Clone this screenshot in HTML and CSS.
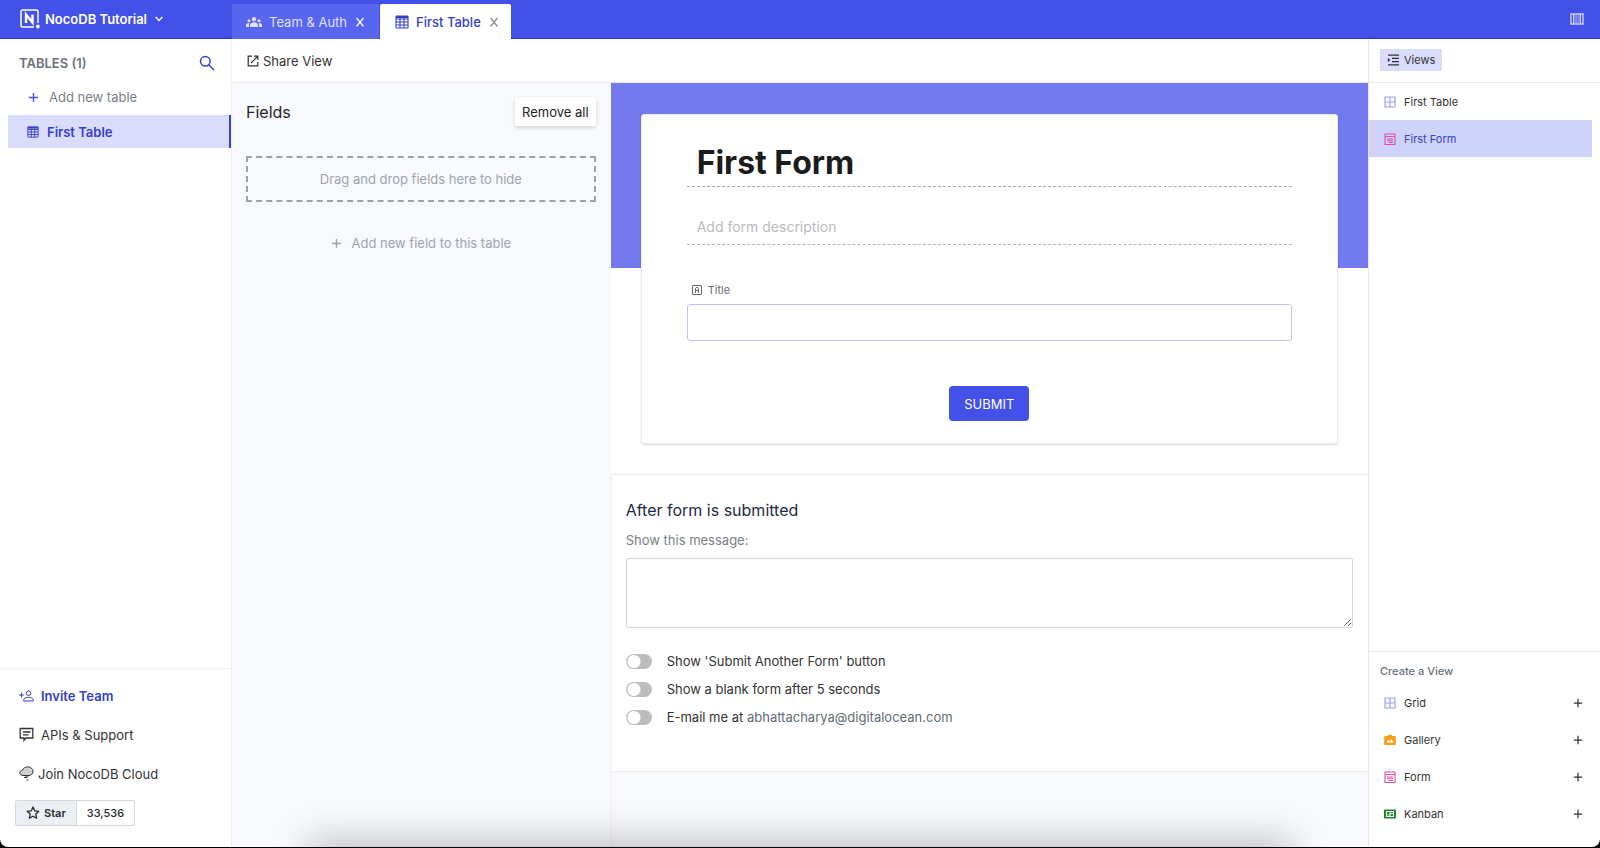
FILE: index.html
```html
<!DOCTYPE html>
<html lang="en">
<head>
<meta charset="utf-8">
<meta name="viewport" content="width=device-width, initial-scale=1">
<title>NocoDB Tutorial</title>
<link rel="stylesheet" href="styles.css">
</head>
<body>
<svg class="sprite" aria-hidden="true">
  <symbol id="table" viewBox="0 0 14 14"><path d="M1.500 1h11a.5.5 0 0 1 .5.500v11a.5.5 0 0 1-.5.500h-11a.5.5 0 0 1-.5-.5v-11A.5.5 0 0 1 1.500 1zM1 4h12M1 7h12M1 10h12M5 3v10M9 3v10" fill="none" stroke="currentColor" stroke-width="1.100"/><path d="M1 1h12v2H1z" fill="currentColor"/></symbol>
  <symbol id="plus" viewBox="0 0 12 12"><path d="M6 1v10M1 6h10" fill="none" stroke="currentColor" stroke-width="1.500"/></symbol>
  <symbol id="close" viewBox="0 0 12 12"><path d="M2.500 2l7 8.500M9.500 2l-7 8.500" fill="none" stroke="currentColor" stroke-width="1.200"/></symbol>
  <symbol id="grid" viewBox="0 0 12 12"><path d="M1 1h10v10H1zM6 1v10M1 6h10" fill="none" stroke="currentColor" stroke-width="1.200"/></symbol>
  <symbol id="form" viewBox="0 0 12 12"><path d="M1 1h10v10.500H1zM1 3.500h10M3 6h6M3 7.800h6M4.500 9.500h4.500" fill="none" stroke="currentColor" stroke-width="1.100"/></symbol>
</svg>
<div class="app">
  <header class="topbar">
    <button class="project" type="button">
      <svg width="20" height="20" viewBox="0 0 20 20" fill="none" stroke="currentColor"><path d="M14 18H2.500A1.500 1.500 0 0 1 1 16.500v-14A1.500 1.500 0 0 1 2.500 1h14A1.500 1.500 0 0 1 18 2.500V14" stroke-width="1.500"/><path d="M6 14V5.500l6.500 8V5.500" stroke-width="2.400"/><circle cx="17.800" cy="17.500" r="1.900" fill="currentColor" stroke="none"/></svg>
      <span>NocoDB Tutorial</span>
      <svg width="8" height="6" viewBox="0 0 8 6" fill="none" stroke="currentColor" stroke-width="1.400"><path d="M.6 1L4 4.500 7.400 1"/></svg>
    </button>
    <nav class="tabs">
      <div class="tab">
        <svg width="16" height="12" viewBox="0 0 16 12" fill="currentColor"><circle cx="8" cy="3.200" r="2.100"/><circle cx="3" cy="4.800" r="1.500"/><circle cx="13" cy="4.800" r="1.500"/><path d="M4 11V9.300c0-2 2-3 4-3s4 1 4 3V11zM0 11V9.200C0 7.700 1.300 7 3.200 7 2.900 8 3 9 3 11zM16 11V9.200C16 7.700 14.700 7 12.800 7c.3 1 .2 2 .2 4z"/></svg>
        <a href="#team">Team &amp; Auth</a>
        <button type="button" aria-label="Close Team &amp; Auth"><svg width="12" height="12"><use href="#close"/></svg></button>
      </div>
      <div class="tab tab-active">
        <svg width="14" height="14"><use href="#table"/></svg>
        <a href="#table">First Table</a>
        <button type="button" aria-label="Close First Table"><svg width="12" height="12"><use href="#close"/></svg></button>
      </div>
    </nav>
    <button class="panel-toggle" type="button" aria-label="Toggle panels"><svg width="14" height="12" viewBox="0 0 14 12" fill="none" stroke="currentColor"><path d="M1 1h12v10H1z" stroke-width="1.400"/><path d="M3.500 1v10M10.500 1v10"/><path d="M4 2h6v8H4z" fill="currentColor" fill-opacity=".4" stroke="none"/></svg></button>
  </header>

  <div class="body">
    <aside class="sidebar">
      <div class="tables-head">
        <h2>TABLES (1)</h2>
        <button type="button" aria-label="Search tables"><svg width="16" height="16" viewBox="0 0 16 16" fill="none" stroke="currentColor" stroke-width="1.500"><circle cx="6.300" cy="6.300" r="4.800"/><path d="M9.800 9.800l5.200 5.200"/></svg></button>
      </div>
      <button class="add-table" type="button"><svg width="11" height="11"><use href="#plus"/></svg>Add new table</button>
      <a class="table-row" href="#first-table"><svg width="12" height="12"><use href="#table"/></svg>First Table</a>
      <div class="side-foot">
        <a class="invite" href="#invite"><svg width="15" height="12" viewBox="0 0 15 12" fill="none" stroke="currentColor"><circle cx="9.500" cy="3.200" r="2.300"/><path d="M4.700 11V9.800c0-1.600 2.600-2.500 4.800-2.500s4.800.9 4.800 2.500V11zM2.500 2.500v5M0 5h5"/></svg>Invite Team</a>
        <a href="#support"><svg width="15" height="15" viewBox="0 0 15 15" fill="none" stroke="currentColor" stroke-width="1.300"><path d="M1.200 1.500h12.600v9.500H7l-2 2.300V11H1.200zM4 5h7.500M4 7.800h5.500"/></svg>APIs &amp; Support</a>
        <a class="cloud" href="#cloud"><svg width="15" height="15" viewBox="0 0 15 15" stroke="currentColor" fill="none"><path d="M4 9.500C2 9.500.8 8.300.8 6.800S2 4.500 3.500 4.300C4.200 2.300 6 .9 8.500.9c3 0 5.500 1.800 5.500 4.300 0 2.600-1.800 4.300-4 4.300z" fill="#cfcfcf"/><path d="M5 11.500h3M7 9.500v2.700M8.800 10v1.500M7.500 14h1.800"/></svg>Join NocoDB Cloud</a>
        <div class="star">
          <button type="button"><svg width="14" height="14" viewBox="0 0 14 14" fill="none" stroke="currentColor" stroke-width="1.300" stroke-linejoin="round"><path d="M7 1l1.700 3.800 4.100.5-3 2.800.8 4.100L7 10.200l-3.600 2 .8-4.100-3-2.800 4.100-.5z"/></svg>Star</button>
          <a href="#stars">33,536</a>
        </div>
      </div>
    </aside>

    <main class="workspace">
      <div class="toolbar">
        <button type="button"><svg width="12" height="12" viewBox="0 0 12 12" fill="none" stroke="currentColor" stroke-width="1.200"><path d="M5 1.200H1.200v9.600h9.600V7M7 1.200h3.800V5M10.800 1.200L4 8"/></svg>Share View</button>
      </div>
      <div class="columns">
        <section class="fields">
          <div class="fields-head"><h2>Fields</h2><button type="button">Remove all</button></div>
          <div class="dropzone">Drag and drop fields here to hide</div>
          <button class="add-field" type="button"><svg width="11" height="11"><use href="#plus"/></svg>Add new field to this table</button>
        </section>
        <section class="form-area">
          <div class="canvas">
            <form class="card">
              <input class="form-title" aria-label="Form title" value="First Form">
              <input class="form-desc" aria-label="Form description" placeholder="Add form description">
              <label class="field-label" for="title"><svg width="10" height="10" viewBox="0 0 10 10" fill="none" stroke="currentColor"><rect x=".5" y=".5" width="9" height="9" rx=".5"/><path d="M3.500 8V3.200L4.200 2.500h1.600l.7.7V8M3.500 5.500h3"/></svg>Title</label>
              <input class="field-input" id="title">
              <button class="submit" type="button">SUBMIT</button>
            </form>
          </div>
          <div class="after">
            <h2>After form is submitted</h2>
            <label class="message-label" for="message">Show this message:</label>
            <textarea id="message"></textarea>
            <div class="options">
              <label><input type="checkbox"><span>Show 'Submit Another Form' button</span></label>
              <label><input type="checkbox"><span>Show a blank form after 5 seconds</span></label>
              <label><input type="checkbox"><span>E-mail me at <span class="mail">abhattacharya@digitalocean.com</span></span></label>
            </div>
          </div>
        </section>
      </div>
    </main>

    <aside class="views">
      <div class="views-head"><button type="button"><svg width="12" height="12" viewBox="0 0 12 12" fill="none" stroke="currentColor" stroke-width="1.200"><path d="M1 1.200h11M5 4.400h7M5 7.600h7M1 10.800h11"/><path d="M.8 4v4l2.600-2z" fill="currentColor" stroke="none"/></svg>Views</button></div>
      <nav class="view-list">
        <a href="#v1"><svg class="c-grid" width="12" height="12"><use href="#grid"/></svg>First Table</a>
        <a class="current" href="#v2"><svg class="c-form" width="12" height="12"><use href="#form"/></svg>First Form</a>
      </nav>
      <div class="create">
        <h3>Create a View</h3>
        <button type="button"><svg class="c-grid" width="12" height="12"><use href="#grid"/></svg><span>Grid</span><svg width="10" height="10"><use href="#plus"/></svg></button>
        <button type="button"><svg class="c-gallery" width="12" height="12" viewBox="0 0 12 12"><path d="M1 2h2.500L4.500.8h3L8.500 2H11a.8.8 0 0 1 .8.800v7.400a.8.8 0 0 1-.8.800H1a.8.8 0 0 1-.8-.8V2.800A.8.8 0 0 1 1 2z" fill="currentColor"/><path d="M2.500 8.500l2-2.700L6 7.500l1.500-2.300 2.200 3.300z" fill="#fff"/></svg><span>Gallery</span><svg width="10" height="10"><use href="#plus"/></svg></button>
        <button type="button"><svg class="c-form" width="12" height="12"><use href="#form"/></svg><span>Form</span><svg width="10" height="10"><use href="#plus"/></svg></button>
        <button type="button"><svg class="c-kanban" width="12" height="12" viewBox="0 0 12 12"><rect y="1.500" width="12" height="9" rx=".8" fill="currentColor"/><path d="M2 3h8v6H2z" fill="#fff"/><path d="M3 4h2.500v2.500H3zM6.500 4H9v1H6.500zM6.500 6H9v2H6.500zM3 7.300h2.500V8H3z" fill="currentColor"/></svg><span>Kanban</span><svg width="10" height="10"><use href="#plus"/></svg></button>
      </div>
    </aside>
  </div>
</div>
</body>
</html>
```

FILE: styles.css
```css
* { box-sizing: border-box; }
html { background: #000; }
body {
  margin: 0;
  font: 13px/20px Inter, "Liberation Sans", sans-serif;
  color: #333;
}
button, input, textarea { font: inherit; color: inherit; }
button { border: 0; padding: 0; background: none; cursor: pointer; display: flex; align-items: center; }
a { color: inherit; text-decoration: none; }
h2, h3 { margin: 0; font-weight: 400; }
svg { flex: none; }
.sprite { position: absolute; width: 0; height: 0; }

.app {
  position: relative;
  display: flex;
  flex-direction: column;
  min-height: calc(100vh - 1px);
  border-radius: 0 0 8px 8px;
  overflow: hidden;
  background: #fff;
}
/* soft shade along the bottom edge of the window */
.app::after {
  content: "";
  position: absolute;
  left: 20%;
  right: 20%;
  bottom: -24px;
  height: 20px;
  box-shadow: 0 0 36px 12px rgba(0, 0, 0, .22);
  pointer-events: none;
}

.topbar { display: flex; height: 39px; background: #4351e8; border-bottom: 1px solid #2b34a8; color: #fff; }
.project { width: 232px; padding-left: 20px; font-weight: 600; }
.project span { margin: 0 8px 0 5px; }
.tabs { display: flex; flex: 1; padding-top: 4px; margin-bottom: -1px; }
.tab { display: flex; align-items: center; padding: 0 13px 0 14px; background: #5865ee; color: #dfe2ff; }
.tab a { margin: 0 7px; }
.tab button { color: #fff; }
.tab-active { padding: 0 11px 0 15px; margin-left: 1px; background: #fff; color: #3540c8; border-radius: 2px 2px 0 0; font-weight: 500; }
.tab-active button { color: #888; }
.panel-toggle { padding: 0 16px; color: #cdd1fb; }

.body { display: flex; flex: 1; }

.sidebar { width: 232px; display: flex; flex-direction: column; border-right: 1px solid #eee; }
.tables-head { display: flex; justify-content: space-between; align-items: center; height: 48px; padding: 0 16px 0 19px; }
.tables-head h2 { font-size: 13px; font-weight: 600; color: #6b7280; }
.tables-head button { color: #3540c8; }
.add-table { height: 20px; margin-bottom: 8px; padding-left: 28px; gap: 10px; color: #7a7f89; }
.add-table svg { color: #4351e8; }
.table-row { display: flex; align-items: center; gap: 8px; height: 33px; margin-left: 8px; padding-left: 19px; background: #d9dcfa; border-right: 2px solid #3540c8; color: #3540c8; font-weight: 600; }
.side-foot { margin-top: auto; padding: 7px 15px 21px; border-top: 1px solid #eee; }
.side-foot > a { display: flex; align-items: center; gap: 7px; height: 39px; padding-left: 4px; }
.side-foot > .invite { color: #3540c8; font-weight: 600; }
.side-foot > .cloud { gap: 4px; }
.star { display: flex; width: max-content; height: 26px; margin-top: 7px; border: 1px solid #d5d8dc; border-radius: 2px; font-size: 11px; font-weight: 600; color: #24292f; }
.star button { gap: 4px; padding: 0 10px; background: #ebeff3; border-right: 1px solid #d5d8dc; font-weight: 600; }
.star a { padding: 2px 10px; font-weight: 500; }

.workspace { flex: 1; display: flex; flex-direction: column; }
.toolbar { display: flex; height: 44px; padding-left: 15px; border-bottom: 1px solid #e9ebee; }
.toolbar button { gap: 4px; }
.columns { flex: 1; display: grid; grid-template-columns: 1fr 2fr; background: #f8f9fc; }
.fields { padding: 15px 15px 0 14px; }
.fields-head { display: flex; justify-content: space-between; align-items: center; margin-bottom: 30px; }
.fields-head h2 { font-size: 16px; color: #1f2330; }
.fields-head button { height: 28px; padding: 0 7px; background: #fff; border-radius: 2px; box-shadow: 0 2px 4px rgba(0, 0, 0, .15); color: #222; }
.dropzone { height: 46px; border: 2px dashed #9ca0a8; text-align: center; line-height: 42px; color: #a0a4af; }
.add-field { margin: 31px auto 0; gap: 10px; color: #a0a4af; }

.form-area { border-left: 1px solid #eee; }
.canvas { padding: 31px 30px 30px; background: linear-gradient(#727aee 185px, #fff 185px); margin-left: -1px; border-bottom: 1px solid #eee; }
.card { display: flex; flex-direction: column; padding: 24px 45px 22px; background: #fff; border: 1px solid #eaeaf0; border-radius: 3px; box-shadow: 0 1px 2px rgba(0, 0, 0, .15); }
.card input { width: 100%; border: 0; outline: 0; background: none; }
.card .form-title { height: 48px; padding: 0 10px; border-bottom: 1px dashed #aaa; font-size: 32px; font-weight: 700; color: #1c1c1c; }
.card .form-desc { height: 36px; margin-top: 22px; padding: 0 10px 0; border-bottom: 1px dashed #b5b5b5; font-size: 14px; }
.form-desc::placeholder { color: #bbb; }
.field-label { display: flex; align-items: center; gap: 6px; margin: 35px 0 4px 5px; font-size: 11px; color: #666b78; }
.card .field-input { height: 37px; border: 1px solid #bfc0f5; border-radius: 3px; }
.submit { align-self: center; height: 35px; margin-top: 45px; padding: 0 15px; border-radius: 4px; background: #4351e8; color: #fff; }
.after { padding: 25px 15px 44px 14px; background: #fff; border-bottom: 1px solid #eee; }
.after h2 { font-size: 16px; color: #1f2a44; }
.message-label { display: block; margin: 10px 0 8px; color: #7a7f89; }
.after textarea { display: block; width: 100%; height: 70px; border: 1px solid #d9d9d9; border-radius: 2px; outline: 0; resize: vertical; }
.options { display: grid; gap: 8px; margin-top: 23px; }
.options label { display: flex; align-items: center; gap: 15px; }
.options input { appearance: none; width: 26px; height: 15px; margin: 0; border-radius: 8px; background: radial-gradient(circle at 8px 50%, #fff 6px, #bdbdbd 7px); }
.mail { color: #5f6b7a; }

.views { width: 232px; display: flex; flex-direction: column; border-left: 1px solid #e6e8ee; font-size: 11px; }
.views-head { height: 44px; padding: 10px 11px; border-bottom: 1px solid #e9ebee; }
.views-head button { height: 22px; padding: 0 7px; gap: 5px; background: #d9dcfa; }
.view-list a, .create button { display: flex; align-items: center; gap: 8px; height: 37px; padding-left: 15px; }
.view-list .current { margin-right: 8px; background: #cfd3f8; color: #3540c8; }
.create { margin-top: auto; padding: 9px 0 15px; border-top: 1px solid #e9e9e9; }
.create h3 { padding-left: 11px; margin-bottom: 3px; font-size: 11px; font-weight: 500; color: #6b7280; }
.create button { width: 100%; padding-right: 17px; }
.create span { flex: 1; text-align: left; }
.c-grid { color: #9aa2f2; }
.c-form { color: #dc4ea4; }
.c-gallery { color: #f9a01b; }
.c-kanban { color: #1b8523; }
```
